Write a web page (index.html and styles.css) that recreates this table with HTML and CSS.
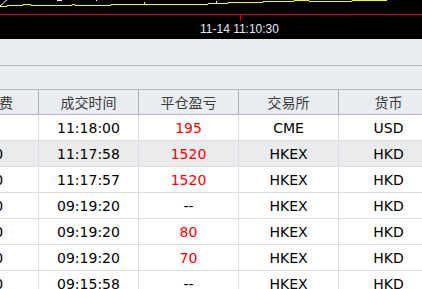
FILE: index.html
```html
<!DOCTYPE html>
<html>
<head>
<meta charset="utf-8">
<link rel="stylesheet" href="styles.css">
</head>
<body>
<div class="chart">
  <svg class="chart-svg" width="422" height="39" viewBox="0 0 422 39">
    <polyline class="yline" points="0,6.5 7,6.5 7,5.5 23,5.5 23,4.5 31,4.5 31,5.5 72,5.5 72,4.5 75,4.5 75,5.5 111,5.5 111,4.5 208,4.5 208,3.5 228,3.5 228,2.5 263,2.5 263,1.5 294,1.5 294,0.5 309,0.5 309,1.5 352,1.5 352,0.5 387,0.5"/>
    <line class="ytick" x1="144.5" y1="2" x2="144.5" y2="4"/>
    <line class="ytick" x1="216.5" y1="1" x2="216.5" y2="3"/>
    <line class="wline" x1="0" y1="6" x2="7" y2="0"/>
    <line class="wline" x1="57" y1="0.5" x2="62" y2="0.5"/>
    <line class="wline" x1="96.5" y1="0" x2="96.5" y2="1"/>
    <line class="rline" x1="0" y1="14.5" x2="422" y2="14.5"/>
    <line class="rline" x1="240.5" y1="15" x2="240.5" y2="21"/>
  </svg>
  <div class="time-label">11-14 11:10:30</div>
</div>
<div class="toolbar"></div>
<div class="subbar"></div>
<div class="grid">
  <div class="row head">
    <div class="cell c1">手续费</div>
    <div class="cell">成交时间</div>
    <div class="cell">平仓盈亏</div>
    <div class="cell">交易所</div>
    <div class="cell">货币</div>
  </div>
  <div class="row">
    <div class="cell c1"></div>
    <div class="cell">11:18:00</div>
    <div class="cell red">195</div>
    <div class="cell">CME</div>
    <div class="cell">USD</div>
  </div>
  <div class="row sel">
    <div class="cell c1">3.0</div>
    <div class="cell">11:17:58</div>
    <div class="cell red">1520</div>
    <div class="cell">HKEX</div>
    <div class="cell">HKD</div>
  </div>
  <div class="row">
    <div class="cell c1">3.0</div>
    <div class="cell">11:17:57</div>
    <div class="cell red">1520</div>
    <div class="cell">HKEX</div>
    <div class="cell">HKD</div>
  </div>
  <div class="row">
    <div class="cell c1">3.0</div>
    <div class="cell">09:19:20</div>
    <div class="cell">--</div>
    <div class="cell">HKEX</div>
    <div class="cell">HKD</div>
  </div>
  <div class="row">
    <div class="cell c1">3.0</div>
    <div class="cell">09:19:20</div>
    <div class="cell red">80</div>
    <div class="cell">HKEX</div>
    <div class="cell">HKD</div>
  </div>
  <div class="row">
    <div class="cell c1">3.0</div>
    <div class="cell">09:19:20</div>
    <div class="cell red">70</div>
    <div class="cell">HKEX</div>
    <div class="cell">HKD</div>
  </div>
  <div class="row">
    <div class="cell c1">3.0</div>
    <div class="cell">09:15:58</div>
    <div class="cell">--</div>
    <div class="cell">HKEX</div>
    <div class="cell">HKD</div>
  </div>
</div>
</body>
</html>
```
FILE: styles.css
```css
html, body {
  margin: 0;
  padding: 0;
  background: #ffffff;
  overflow: hidden;
}
body {
  width: 422px;
  height: 289px;
  font-family: "DejaVu Sans", sans-serif;
}
.chart {
  position: relative;
  height: 39px;
  background: #000000;
}
.chart-svg {
  display: block;
}
.yline {
  fill: none;
  stroke: #ffff00;
  stroke-width: 1;
}
.ytick {
  stroke: #ffff00;
  stroke-width: 1;
}
.wline {
  stroke: #ffffff;
  stroke-width: 1;
}
.rline {
  stroke: #d40000;
  stroke-width: 1;
}
.time-label {
  position: absolute;
  left: 200px;
  top: 22px;
  font-family: "Liberation Sans", Arial, sans-serif;
  font-size: 12px;
  line-height: 14px;
  color: #e2ecf8;
  white-space: nowrap;
}
.toolbar {
  height: 26px;
  background: #e9ecf0;
  border-bottom: 1px solid #b4b8be;
}
.subbar {
  height: 23px;
  background: #e9ecf0;
  border-bottom: 1px solid #b4b8be;
}
.grid {
  margin-left: -54px;
}
.row {
  display: flex;
  height: 26px;
  box-sizing: border-box;
  border-bottom: 1px solid #dadde1;
  background: #ffffff;
}
.row.sel {
  background: #eaebed;
}
.row.head {
  height: 25px;
  background: #e9ecf0;
  border-bottom: 1px solid #b4b8be;
}
.cell {
  flex: 0 0 100px;
  width: 100px;
  box-sizing: border-box;
  border-right: 1px solid #dadde1;
  display: flex;
  align-items: center;
  justify-content: center;
  font-size: 14px;
  color: #000000;
  white-space: nowrap;
  overflow: hidden;
}
.cell.c1 {
  flex: 0 0 93px;
  width: 93px;
}
.head .cell {
  border-right-color: #aab0b6;
  font-family: "Noto Sans CJK SC", "DejaVu Sans", sans-serif;
  color: #3a3a3a;
}
.red {
  color: #ff0000;
}
```
